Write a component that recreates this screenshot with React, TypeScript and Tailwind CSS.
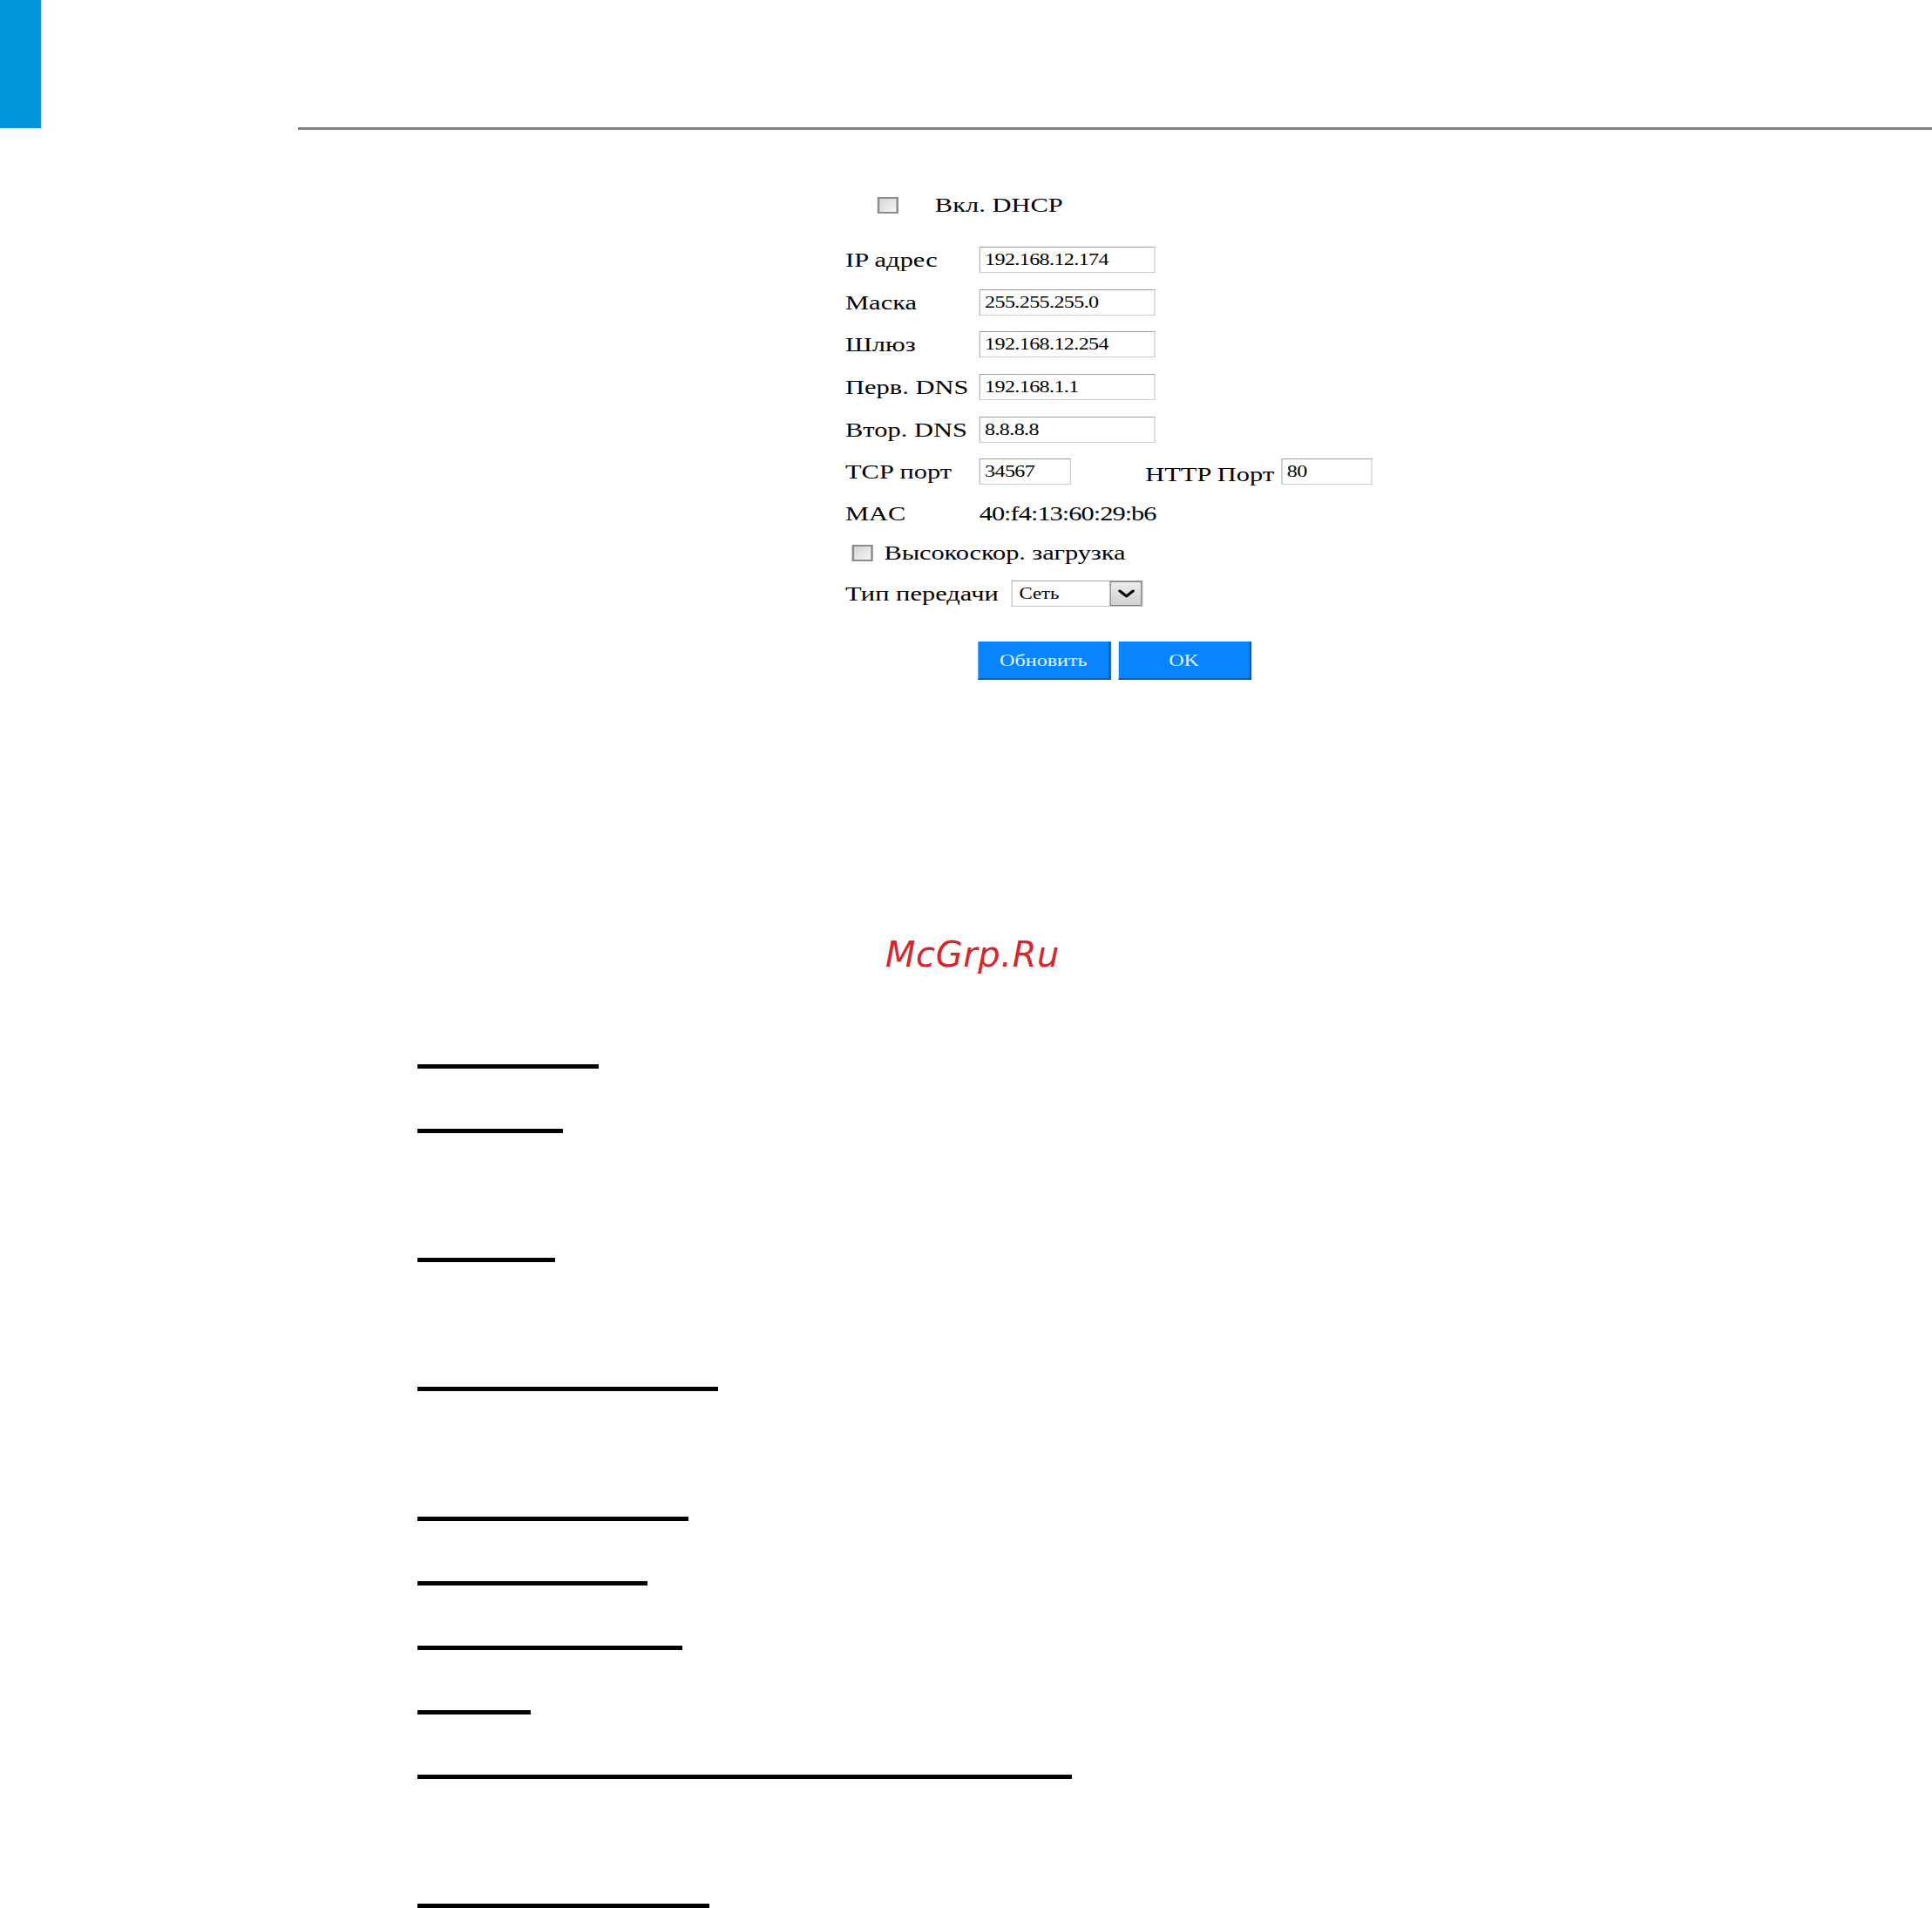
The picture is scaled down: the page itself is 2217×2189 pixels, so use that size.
const fields = [
  { label: 'IP адрес', value: '192.168.12.174' },
  { label: 'Маска', value: '255.255.255.0' },
  { label: 'Шлюз', value: '192.168.12.254' },
  { label: 'Перв. DNS', value: '192.168.1.1' },
  { label: 'Втор. DNS', value: '8.8.8.8' },
]

const bars = [
  'mt-[106px] w-[208px]',
  'mt-[69.1px] w-[167px]',
  'mt-[143.1px] w-[158px]',
  'mt-[143.2px] w-[345px]',
  'mt-[143.2px] w-[311px]',
  'mt-[69.1px] w-[264px]',
  'mt-[69.1px] w-[304px]',
  'mt-[69.1px] w-[130px]',
  'mt-[69.1px] w-[751px]',
  'mt-[143.1px] w-[335px]',
]

function Checkbox() {
  return (
    <span className="block h-[19px] w-[19px] shrink-0 border-2 border-[#8c8c8c] bg-linear-to-br from-[#d4d4d4] to-[#f6f6f6]" />
  )
}

function TextBox({ value, width }: { value: string; width: string }) {
  return (
    <input
      readOnly
      defaultValue={value}
      className={`${width} h-[30px] border border-[#cdcdcd] border-t-[#a3a3a3] border-l-[#b8b8b8] bg-white pl-[4px] text-[19px] leading-none tracking-[-0.5px] text-black outline-none`}
    />
  )
}

export default function App() {
  return (
    <div className="h-[2189px] w-full overflow-hidden bg-white font-['Liberation_Serif',serif] text-black">
      <header className="flex items-start">
        <div className="h-[147px] w-[47px] bg-[#0094d8]" />
        <div className="ml-[295px] mt-[146px] h-[3px] flex-1 bg-[#808080]" />
      </header>

      <main className="ml-[970px] mt-[67px] w-[480px] origin-top-left scale-x-[1.27]">
        <div className="flex h-[38px] items-center">
          <span className="ml-[29px]">
            <Checkbox />
          </span>
          <span className="ml-[33px] text-[24px] leading-none">Вкл. DHCP</span>
        </div>

        <div className="mt-[20px]">
          {fields.map((f) => (
            <div key={f.label} className="flex h-[48.6px] items-center">
              <span className="w-[121px] shrink-0 text-[24px] leading-none">{f.label}</span>
              <TextBox value={f.value} width="w-[159px]" />
            </div>
          ))}
          <div className="flex h-[48.6px] items-center">
            <span className="w-[121px] shrink-0 text-[24px] leading-none">TCP порт</span>
            <TextBox value="34567" width="w-[83px]" />
            <span className="ml-[67px] w-[123px] shrink-0 translate-y-[3px] text-[24px] leading-none">
              HTTP Порт
            </span>
            <TextBox value="80" width="w-[82px]" />
          </div>
        </div>

        <div className="flex h-[46px] items-center">
          <span className="w-[121px] shrink-0 text-[24px] leading-none">MAC</span>
          <span className="text-[24px] leading-none tracking-[-0.8px]">40:f4:13:60:29:b6</span>
        </div>

        <div className="flex h-[45px] items-center">
          <span className="ml-[6px]">
            <Checkbox />
          </span>
          <span className="ml-[10px] text-[24px] leading-none tracking-[-0.1px]">Высокоскор. загрузка</span>
        </div>

        <div className="flex h-[49px] items-center">
          <span className="w-[150px] shrink-0 text-[24px] leading-none">Тип передачи</span>
          <div className="flex h-[30px] w-[119px] border border-[#c4c4c4] border-t-[#a8a8a8] bg-white">
            <span className="flex flex-1 items-center pl-[6px] text-[18px] leading-none">Сеть</span>
            <span className="flex h-full w-[29px] items-center justify-center border border-[#7b7b7b] bg-linear-to-b from-[#ececec] to-[#d2d2d2]">
              <svg width="16" height="10" viewBox="0 0 16 10" fill="none">
                <path d="M2 2 L8 8 L14 2" stroke="#000" strokeWidth="2.8" strokeLinecap="round" strokeLinejoin="round" />
              </svg>
            </span>
          </div>
        </div>

        <div className="ml-[120px] mt-[30.4px] flex gap-[7px]">
          <button className="h-[44px] w-[120px] border-r-2 border-b-2 border-[#0d5fb8] bg-[#0884fe] pt-[2px] text-[19px] leading-none text-[#eaf2ff]">
            Обновить
          </button>
          <button className="h-[44px] w-[120px] border-r-2 border-b-2 border-[#0d5fb8] bg-[#0884fe] pt-[2px] text-[19px] leading-none text-[#eaf2ff]">
            OK
          </button>
        </div>
      </main>

      <div className="ml-[1016px] mt-[295px] font-['DejaVu_Sans',sans-serif] text-[40px] italic leading-none tracking-[0.6px] text-[#d6262c]">
        McGrp.Ru
      </div>

      <div className="ml-[479px] flex flex-col">
        {bars.map((b, i) => (
          <div key={i} className={`${b} h-[5px] bg-black`} />
        ))}
      </div>
    </div>
  )
}
